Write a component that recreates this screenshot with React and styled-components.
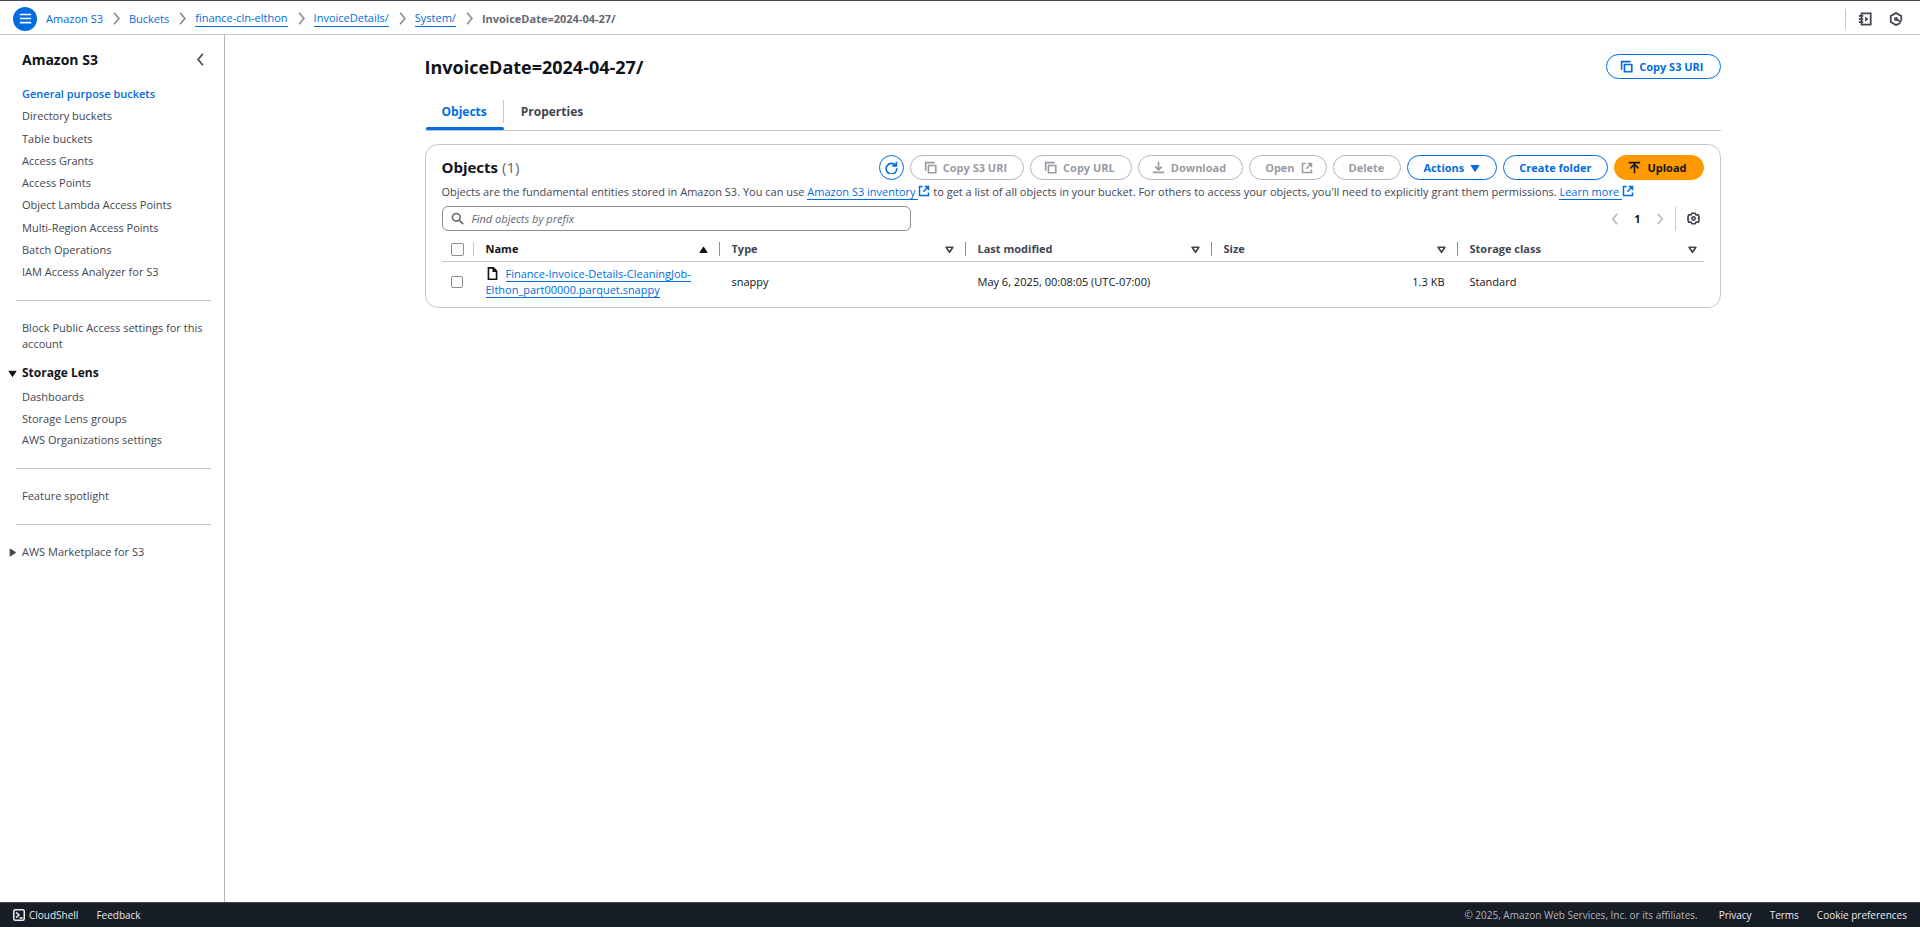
import React from "react";
import styled, { createGlobalStyle, css } from "styled-components";

const c = {
  blue: "#006ce0",
  text: "#0f141a",
  body: "#424650",
  muted: "#656871",
  line: "#c6c6cd",
  field: "#8c8c94",
  disabled: "#9a9aa5",
  orange: "#ff9900",
  dark: "#161d26",
};

const Global = createGlobalStyle`
  * { box-sizing: border-box; }
  body { margin: 0; background: #fff; }
  body, button, input {
    font-family: "Open Sans", "Noto Sans", sans-serif;
    font-size: 11px;
    line-height: 16px;
    color: ${c.text};
  }
  ul, ol, h1, h2, p { margin: 0; padding: 0; list-style: none; }
  a { text-decoration: none; color: inherit; }
  button { border: 0; background: none; padding: 0; color: inherit; cursor: pointer; }
`;

const Page = styled.div`
  min-height: 100vh;
  display: flex;
  flex-direction: column;
`;

const Header = styled.header`
  height: 35px;
  flex: none;
  display: flex;
  align-items: center;
  padding: 2px 13px 0;
  border-top: 1px solid ${c.body};
  border-bottom: 1px solid ${c.line};
`;

const MenuButton = styled.button`
  width: 24px;
  height: 24px;
  border-radius: 50%;
  background: ${c.blue};
  color: #fff;
  display: grid;
  place-items: center;
`;

const Crumbs = styled.ol`
  display: flex;
  align-items: center;
  margin-left: 9px;
  flex: 1;
`;

const Crumb = styled.li`
  display: flex;
  align-items: center;
  color: ${(p) => (p.$current ? c.muted : c.blue)};
  font-weight: ${(p) => (p.$current ? 700 : 400)};
  & > svg { margin: 0 6px 0 7px; color: ${c.field}; }
`;

const Link = styled.a`
  color: ${c.blue};
  border-bottom: ${(p) => (p.$underline ? `1px solid ${c.blue}` : "0")};
`;

const HeaderTools = styled.div`
  display: flex;
  align-items: center;
  gap: 17px;
  height: 20px;
  padding: 0 4px 0 12px;
  border-left: 1px solid ${c.line};
  color: ${c.body};
`;

const IconButton = styled.button`
  display: grid;
  place-items: center;
  color: ${(p) => p.$color || c.body};
`;

const Body = styled.div`
  flex: 1;
  display: flex;
`;

const Sidebar = styled.nav`
  width: 225px;
  flex: none;
  border-right: 1px solid #b4b4bb;
  padding: 15px 13px 0 16px;
  color: ${c.body};
`;

const SideHead = styled.div`
  display: flex;
  justify-content: space-between;
  align-items: flex-start;
  height: 20px;
  padding: 0 4px 0 6px;
  margin-bottom: 16px;
`;

const SideTitle = styled.h2`
  font-size: 14px;
  line-height: 20px;
  color: ${c.text};
`;

const CollapseButton = styled(IconButton)`
  height: 18px;
`;

const SideList = styled.ul`
  display: flex;
  flex-direction: column;
  justify-content: space-between;
  padding: 0 6px;
  min-height: ${(p) => p.$min || 0}px;
`;

const SideLink = styled.a`
  display: block;
  color: ${(p) => (p.$active ? c.blue : c.body)};
  font-weight: ${(p) => (p.$active ? 600 : 400)};
`;

const Rule = styled.hr`
  border: 0;
  border-top: 1px solid ${c.line};
  margin: 20px 0 19px;
`;

const Expander = styled.button`
  display: flex;
  align-items: center;
  gap: 5px;
  margin-left: -8px;
  font-size: ${(p) => (p.$strong ? 12 : 11)}px;
  font-weight: ${(p) => (p.$strong ? 700 : 400)};
  color: ${(p) => (p.$strong ? c.text : c.body)};
  margin-top: ${(p) => (p.$strong ? 13 : 0)}px;
  margin-bottom: ${(p) => (p.$strong ? 8 : 0)}px;
`;

const Main = styled.main`
  flex: 1;
  min-width: 0;
`;

const Content = styled.div`
  max-width: 1296px;
  margin: 0 auto;
  padding-top: 19px;
`;

const TitleRow = styled.div`
  display: flex;
  justify-content: space-between;
  align-items: center;
`;

const Title = styled.h1`
  font-size: 18px;
  line-height: 24px;
`;

const Tabs = styled.div`
  display: flex;
  height: 37px;
  margin: 15px 0 13px;
  border-bottom: 1px solid ${c.line};
`;

const Tab = styled.button`
  position: relative;
  height: 36px;
  padding: 0 17px;
  font-size: 12px;
  font-weight: 700;
  color: ${(p) => (p.$active ? c.blue : c.body)};
  ${(p) =>
    p.$active &&
    css`
      &::before {
        content: "";
        position: absolute;
        right: 0;
        top: 6px;
        height: 23px;
        border-right: 1px solid ${c.line};
      }
      &::after {
        content: "";
        position: absolute;
        left: 1px;
        right: 0;
        bottom: 0;
        height: 3px;
        border-radius: 2px;
        background: ${c.blue};
      }
    `}
`;

const Card = styled.section`
  border: 1px solid ${c.line};
  border-radius: 13px;
  padding: 10px 16px 5px;
`;

const CardHead = styled.div`
  display: flex;
  justify-content: space-between;
  align-items: flex-start;
`;

const CardTitle = styled.h2`
  font-size: 15px;
  line-height: 24px;
`;

const Count = styled.span`
  font-weight: 400;
  color: ${c.muted};
`;

const Actions = styled.div`
  display: flex;
  gap: 6px;
`;

const Button = styled.button`
  height: 25px;
  min-width: 25px;
  display: flex;
  align-items: center;
  justify-content: center;
  gap: 6px;
  padding-left: ${(p) => (p.$round ? 0 : p.$lead ? 13 : 15)}px;
  padding-right: ${(p) => (p.$round ? 0 : p.$trail ? 13 : 16)}px;
  border-radius: 16px;
  border: 1px solid ${(p) => (p.$primary ? c.orange : c.blue)};
  background: ${(p) => (p.$primary ? c.orange : "#fff")};
  color: ${(p) => (p.$primary ? c.text : c.blue)};
  font-weight: 700;
  white-space: nowrap;
  &:disabled {
    color: ${c.disabled};
    border-color: #b4b4bb;
    cursor: default;
  }
`;

const Description = styled.p`
  color: ${c.body};
  margin: 4px 0 6px;
  svg { vertical-align: -1px; color: ${c.blue}; }
`;

const Toolbar = styled.div`
  display: flex;
  justify-content: space-between;
  align-items: center;
`;

const Search = styled.label`
  display: flex;
  align-items: center;
  gap: 8px;
  width: 469px;
  height: 25px;
  padding: 0 8px;
  border: 1px solid ${c.field};
  border-radius: 6px;
  color: ${c.muted};
`;

const SearchInput = styled.input`
  flex: 1;
  border: 0;
  outline: 0;
  padding: 0;
  background: none;
  &::placeholder { color: ${c.muted}; font-style: italic; opacity: 1; }
`;

const Pager = styled.div`
  display: flex;
  align-items: center;
  gap: 13px;
  padding-right: 4px;
`;

const PageNumber = styled.button`
  font-weight: 700;
`;

const PagerTools = styled.div`
  display: flex;
  align-items: center;
  height: 24px;
  padding-left: 11px;
  margin-left: -4px;
  border-left: 1px solid ${c.line};
`;

const Table = styled.table`
  width: 100%;
  margin-top: 7px;
  table-layout: fixed;
  border-collapse: collapse;
`;

const Th = styled.th`
  height: 23px;
  padding: 0 6px 0 0;
  text-align: left;
  color: ${(p) => (p.$sorted ? c.text : c.body)};
  border-bottom: 1px solid ${c.line};
  width: ${(p) => (p.$select ? "32px" : "auto")};
`;

const ThInner = styled.div`
  display: flex;
  align-items: center;
  justify-content: space-between;
  height: 14px;
  padding-left: 12px;
`;

const ThButton = styled.button`
  flex: 1;
  display: flex;
  align-items: center;
  justify-content: space-between;
  font-weight: 700;
  padding-right: ${(p) => (p.$last ? 1 : 11)}px;
`;

const Divider = styled.span`
  width: 1px;
  height: 14px;
  margin-right: -6px;
  background: ${(p) => (p.$light ? c.line : c.field)};
`;

const Td = styled.td`
  height: 41px;
  padding: 0 13px 0 12px;
  text-align: ${(p) => (p.$right ? "right" : "left")};
  svg { vertical-align: -2px; margin-right: 7px; }
`;

const SelectTd = styled.td`
  padding: 0 0 0 9px;
`;

const Select = styled.input`
  appearance: none;
  display: block;
  width: ${(p) => (p.$small ? 12 : 13)}px;
  height: ${(p) => (p.$small ? 12 : 13)}px;
  margin: 0;
  border: 1px solid ${c.field};
  border-radius: 2px;
  background: #fff;
`;

const SelectHead = styled.div`
  display: flex;
  align-items: center;
  justify-content: space-between;
  padding-left: 9px;
`;

const Footer = styled.footer`
  height: 25px;
  flex: none;
  display: flex;
  align-items: center;
  gap: 18px;
  padding: 0 13px;
  background: ${c.dark};
  border-top: 1px solid ${c.body};
  color: #ebebf0;
  font-size: 10px;
`;

const FooterLink = styled.a`
  display: flex;
  align-items: center;
  gap: 4px;
`;

const Copyright = styled.span`
  margin-left: auto;
  margin-right: 3px;
  color: #b4b4bb;
`;

const Svg = ({ size = 13, children, w = 2, ...rest }) => (
  <svg width={size} height={size} viewBox="0 0 16 16" fill="none" stroke="currentColor" strokeWidth={w} aria-hidden="true" {...rest}>
    {children}
  </svg>
);
const Chevron = ({ left, size = 13 }) => (
  <Svg size={size}><path d={left ? "M11 1 5 8l6 7" : "m5 1 6 7-6 7"} /></Svg>
);
const MenuIcon = () => <Svg><path d="M1 3h14M1 8h14M1 13h14" /></Svg>;
const CopyIcon = () => <Svg><path d="M2 12V2h11" /><path d="M5.500 5.500h9v9h-9z" /></Svg>;
const External = ({ size = 12 }) => <Svg size={size}><path d="M6 2H2v12h12v-4M9 2h5v5M14 2 7 9" /></Svg>;
const DownloadIcon = () => <Svg><path d="M8 1v10M4 7l4 4 4-4M1 14h14" /></Svg>;
const UploadIcon = () => <Svg><path d="M8 15V5M3 9l5-5 5 5M1 2h14" /></Svg>;
const Refresh = () => <Svg><path d="M14 1v5H9M13.500 6A6.500 6.500 0 1 0 14.500 9" /></Svg>;
const SearchIcon = () => <Svg><circle cx="6.500" cy="6.500" r="4.700" /><path d="m10 10 5 5" /></Svg>;
const FileIcon = () => <Svg><path d="M9 1H3v14h10V5L9 1v4h4" /></Svg>;
const Caret = ({ dir = "down", open, size = 9 }) => (
  <Svg size={size}>
    <path
      d={{ down: "M2 4h12L8 13z", up: "M2 13h12L8 4z", right: "M4 2v12l9-6z" }[dir]}
      fill={open ? "none" : "currentColor"}
      strokeLinejoin="round"
      strokeWidth={open ? 3 : 2}
    />
  </Svg>
);
const Gear = () => (
  <Svg>
    <path d="M6 1.500h4l1 2h3L15 7l-1 1 1 1-1 3.500h-3l-1 2H6l-1-2H2L1 9l1-1-1-1 1-3.500h3z" strokeLinejoin="round" />
    <circle cx="8" cy="8" r="2" />
  </Svg>
);
const Tutorial = () => (
  <Svg size={14}>
    <path d="M4 1.500h10.500v13H4zM1 4.500h5M1 8h5M1 11.500h5" />
    <path d="m8 5 4 3-4 3z" fill="currentColor" stroke="none" />
  </Svg>
);
const Hexagon = () => (
  <Svg size={14}>
    <path d="M13 12.500 8 15l-6-3.500v-7L8 1l6 3.500V10" />
    <circle cx="8" cy="8" r="2.200" fill="currentColor" stroke="none" />
    <path d="m8 8 6 3.500" />
  </Svg>
);
const Shell = () => (
  <Svg size={12}><rect x="1" y="1" width="14" height="14" rx="2" /><path d="m4 4.500 4 3.500-4 3.500M8.500 12H13" /></Svg>
);

const crumbs = [
  { label: "Amazon S3" },
  { label: "Buckets" },
  { label: "finance-cln-elthon", underline: true },
  { label: "InvoiceDetails/", underline: true },
  { label: "System/", underline: true },
];

const bucketLinks = [
  "General purpose buckets", "Directory buckets", "Table buckets", "Access Grants", "Access Points",
  "Object Lambda Access Points", "Multi-Region Access Points", "Batch Operations", "IAM Access Analyzer for S3",
];

const columns = ["Name", "Type", "Last modified", "Size", "Storage class"];

export default function App() {
  return (
    <Page>
      <Global />
      <Header>
        <MenuButton aria-label="Open menu"><MenuIcon /></MenuButton>
        <Crumbs>
          {crumbs.map((item) => (
            <Crumb key={item.label}>
              <Link href="#" $underline={item.underline}>{item.label}</Link>
              <Chevron />
            </Crumb>
          ))}
          <Crumb $current>InvoiceDate=2024-04-27/</Crumb>
        </Crumbs>
        <HeaderTools>
          <IconButton aria-label="Tutorials"><Tutorial /></IconButton>
          <IconButton aria-label="Diagnostics"><Hexagon /></IconButton>
        </HeaderTools>
      </Header>
      <Body>
        <Sidebar>
          <SideHead>
            <SideTitle>Amazon S3</SideTitle>
            <CollapseButton aria-label="Close navigation"><Chevron left /></CollapseButton>
          </SideHead>
          <SideList $min={194}>
            {bucketLinks.map((label, i) => (
              <li key={label}><SideLink href="#" $active={i === 0}>{label}</SideLink></li>
            ))}
          </SideList>
          <Rule />
          <SideList>
            <li><SideLink href="#">Block Public Access settings for this account</SideLink></li>
          </SideList>
          <Expander $strong aria-expanded="true"><Caret />Storage Lens</Expander>
          <SideList $min={59}>
            {["Dashboards", "Storage Lens groups", "AWS Organizations settings"].map((label) => (
              <li key={label}><SideLink href="#">{label}</SideLink></li>
            ))}
          </SideList>
          <Rule />
          <SideList>
            <li><SideLink href="#">Feature spotlight</SideLink></li>
          </SideList>
          <Rule />
          <Expander aria-expanded="false"><Caret dir="right" />AWS Marketplace for S3</Expander>
        </Sidebar>
        <Main>
          <Content>
            <TitleRow>
              <Title>InvoiceDate=2024-04-27/</Title>
              <Button $lead><CopyIcon />Copy S3 URI</Button>
            </TitleRow>
            <Tabs role="tablist">
              <Tab role="tab" aria-selected="true" $active>Objects</Tab>
              <Tab role="tab" aria-selected="false">Properties</Tab>
            </Tabs>
            <Card>
              <CardHead>
                <CardTitle>Objects <Count>(1)</Count></CardTitle>
                <Actions>
                  <Button $round aria-label="Refresh"><Refresh /></Button>
                  <Button $lead disabled><CopyIcon />Copy S3 URI</Button>
                  <Button $lead disabled><CopyIcon />Copy URL</Button>
                  <Button $lead disabled><DownloadIcon />Download</Button>
                  <Button $trail disabled>Open<External /></Button>
                  <Button disabled>Delete</Button>
                  <Button>Actions<Caret size={10} /></Button>
                  <Button>Create folder</Button>
                  <Button $primary $lead><UploadIcon />Upload</Button>
                </Actions>
              </CardHead>
              <Description>
                Objects are the fundamental entities stored in Amazon S3. You can use{" "}
                <Link href="#" $underline>Amazon S3 inventory&nbsp;</Link><External />{" "}
                to get a list of all objects in your bucket. For others to access your objects, you'll need to
                explicitly grant them permissions.{" "}
                <Link href="#" $underline>Learn more&nbsp;</Link><External />
              </Description>
              <Toolbar>
                <Search>
                  <SearchIcon />
                  <SearchInput type="text" aria-label="Find objects by prefix" placeholder="Find objects by prefix" />
                </Search>
                <Pager>
                  <IconButton $color="#b4b4bb" aria-label="Previous page"><Chevron left size={12} /></IconButton>
                  <PageNumber>1</PageNumber>
                  <IconButton $color="#b4b4bb" aria-label="Next page"><Chevron size={12} /></IconButton>
                  <PagerTools>
                    <IconButton aria-label="Preferences"><Gear /></IconButton>
                  </PagerTools>
                </Pager>
              </Toolbar>
              <Table>
                <thead>
                  <tr>
                    <Th $select>
                      <SelectHead><Select type="checkbox" aria-label="Select all objects" /><Divider $light /></SelectHead>
                    </Th>
                    {columns.map((name, i) => (
                      <Th key={name} $sorted={i === 0}>
                        <ThInner>
                          <ThButton $last={i === 4}>
                            {name}
                            {i === 0 ? <Caret dir="up" /> : <Caret open />}
                          </ThButton>
                          {i < 4 && <Divider />}
                        </ThInner>
                      </Th>
                    ))}
                  </tr>
                </thead>
                <tbody>
                  <tr>
                    <SelectTd><Select $small type="checkbox" aria-label="Select object" /></SelectTd>
                    <Td>
                      <FileIcon />
                      <Link href="#" $underline>Finance-Invoice-Details-CleaningJob-Elthon_part00000.parquet.snappy</Link>
                    </Td>
                    <Td>snappy</Td>
                    <Td>May 6, 2025, 00:08:05 (UTC-07:00)</Td>
                    <Td $right>1.3 KB</Td>
                    <Td>Standard</Td>
                  </tr>
                </tbody>
              </Table>
            </Card>
          </Content>
        </Main>
      </Body>
      <Footer>
        <FooterLink href="#"><Shell />CloudShell</FooterLink>
        <FooterLink href="#">Feedback</FooterLink>
        <Copyright>© 2025, Amazon Web Services, Inc. or its affiliates.</Copyright>
        <FooterLink href="#">Privacy</FooterLink>
        <FooterLink href="#">Terms</FooterLink>
        <FooterLink href="#">Cookie preferences</FooterLink>
      </Footer>
    </Page>
  );
}
